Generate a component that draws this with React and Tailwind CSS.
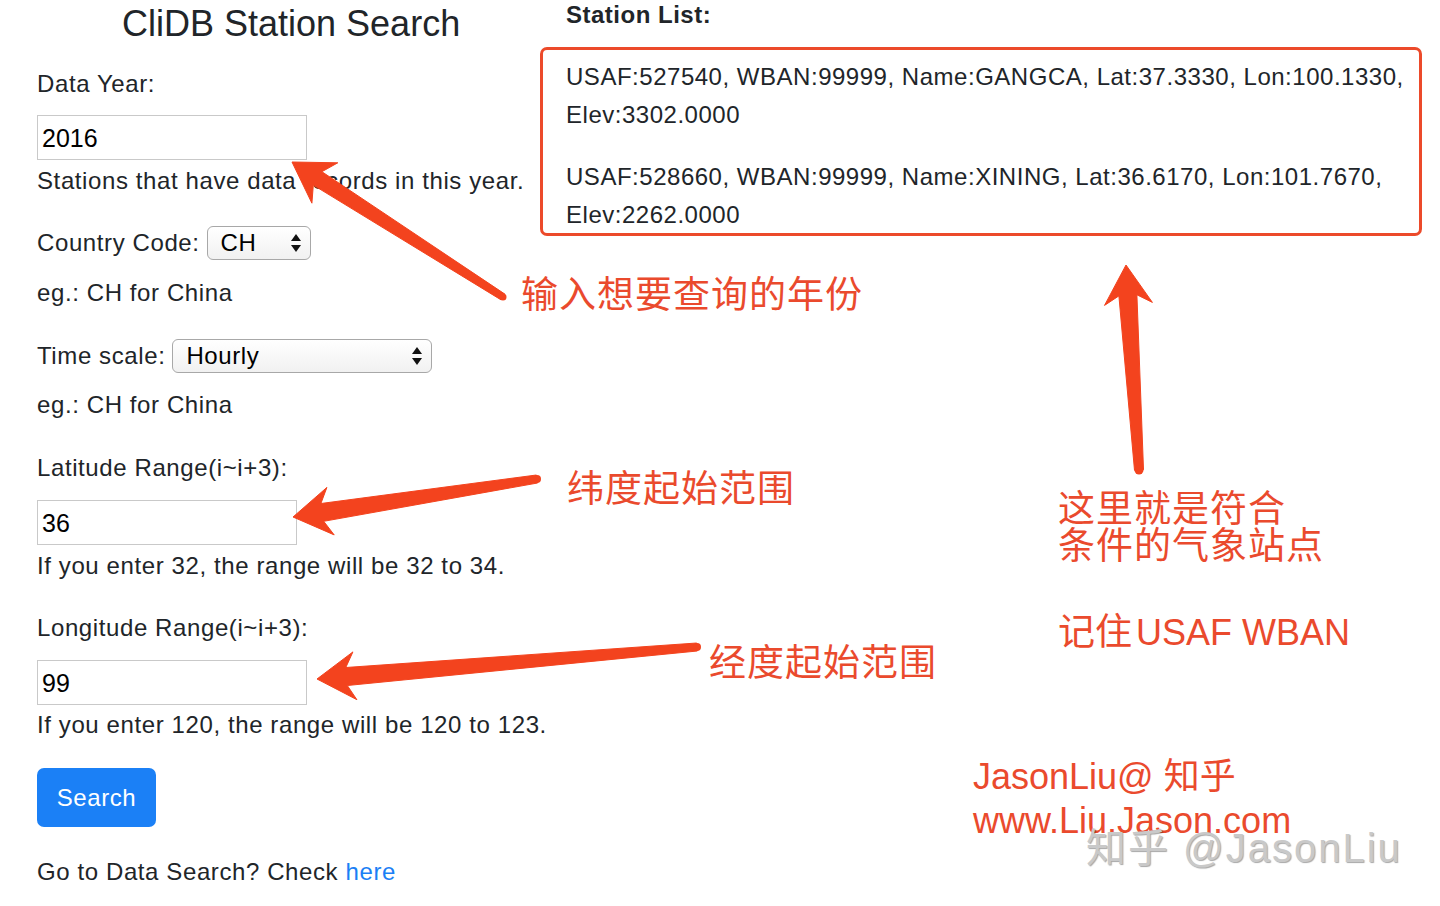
import React from "react";

function arrowPoly(tip, tail, headLen, headHalf, wHead, wTail) {
  const dx = tail[0] - tip[0];
  const dy = tail[1] - tip[1];
  const len = Math.sqrt(dx * dx + dy * dy);
  const ux = dx / len, uy = dy / len;
  const nx = -uy, ny = ux;
  const bx = tip[0] + ux * headLen, by = tip[1] + uy * headLen;
  const jx = tip[0] + ux * headLen * 0.78, jy = tip[1] + uy * headLen * 0.78;
  const pts = [
    [tip[0], tip[1]],
    [bx + nx * headHalf, by + ny * headHalf],
    [jx + nx * wHead / 2, jy + ny * wHead / 2],
    [tail[0] + nx * wTail / 2, tail[1] + ny * wTail / 2],
    [tail[0] - nx * wTail / 2, tail[1] - ny * wTail / 2],
    [jx - nx * wHead / 2, jy - ny * wHead / 2],
    [bx - nx * headHalf, by - ny * headHalf],
  ];
  return pts.map((p) => p[0].toFixed(1) + "," + p[1].toFixed(1)).join(" ");
}

const ARROWS = [
  { tip: [292, 162], tail: [503, 297], hl: 39, hh: 24, wh: 16, wt: 7 },
  { tip: [293, 517], tail: [537, 479], hl: 38, hh: 24, wh: 18, wt: 8 },
  { tip: [317, 679], tail: [697, 647], hl: 38, hh: 24, wh: 18, wt: 8 },
  { tip: [1126, 265], tail: [1139, 470], hl: 39, hh: 24, wh: 18, wt: 9 },
];

function SelectArrows() {
  return (
    <svg width="10" height="18" viewBox="0 0 10 18">
      <path d="M5 0 L10 7 L0 7 Z" fill="#111" />
      <path d="M0 11 L10 11 L5 18 Z" fill="#111" />
    </svg>
  );
}

function FakeSelect({ value, w }) {
  return (
    <div
      className={`flex items-center justify-between h-[34px] ${w} rounded-[6px] border border-[#a8a8a8] bg-gradient-to-b from-white to-[#f1f1f1] pl-[13px] pr-[9px] text-[24px] leading-none text-black`}
    >
      <span>{value}</span>
      <SelectArrows />
    </div>
  );
}

export default function App() {
  return (
    <div className="relative w-[1440px] h-[906px] overflow-hidden bg-white font-['Liberation_Sans',Arial,sans-serif] text-[#212529]">
      <div className="flex">
        {/* left form column */}
        <div className="w-[540px] shrink-0 pl-[37px] flex flex-col text-[24px] leading-[36px] tracking-[0.6px]">
          <h1 className="text-[36px] leading-[48px] pl-[85px] font-normal tracking-normal">CliDB Station Search</h1>
          <p className="mt-[18px]">Data Year:</p>
          <div className="mt-[13px] w-[270px] h-[45px] border border-[#c9c9c9] px-[4px] flex items-center text-black text-[25px] tracking-normal">2016</div>
          <p className="mt-[3px] whitespace-nowrap">Stations that have data records in this year.</p>

          <div className="mt-[26px] flex items-center gap-[7px] h-[36px]">
            <span>Country Code:</span>
            <FakeSelect value="CH" w="w-[104px]" />
          </div>
          <p className="mt-[14px]">eg.: CH for China</p>

          <div className="mt-[27px] flex items-center gap-[7px] h-[36px]">
            <span>Time scale:</span>
            <FakeSelect value="Hourly" w="w-[260px]" />
          </div>
          <p className="mt-[13px]">eg.: CH for China</p>

          <p className="mt-[27px]">Latitude Range(i~i+3):</p>
          <div className="mt-[14px] w-[260px] h-[45px] border border-[#c9c9c9] px-[4px] flex items-center text-black text-[25px] tracking-normal">36</div>
          <p className="mt-[3px] whitespace-nowrap">If you enter 32, the range will be 32 to 34.</p>

          <p className="mt-[26px]">Longitude Range(i~i+3):</p>
          <div className="mt-[14px] w-[270px] h-[45px] border border-[#c9c9c9] px-[4px] flex items-center text-black text-[25px] tracking-normal">99</div>
          <p className="mt-[2px] whitespace-nowrap">If you enter 120, the range will be 120 to 123.</p>

          <button className="mt-[25px] w-[119px] h-[59px] rounded-[7px] bg-[#1b80f6] text-white text-[24px]">Search</button>

          <p className="mt-[27px]">
            Go to Data Search? Check <span className="text-[#1b7ff5]">here</span>
          </p>
        </div>

        {/* right station list column */}
        <div className="flex-1 flex flex-col">
          <p className="pl-[26px] text-[24px] leading-[30px] font-bold tracking-[0.5px]">Station List:</p>
          <div className="mt-[17px] w-[882px] h-[189px] border-[3px] border-[#ec4a2a] rounded-[7px] pl-[23px] pt-[8px] text-[24px] leading-[38px] whitespace-nowrap tracking-[0.52px]">
            <p>
              USAF:527540, WBAN:99999, Name:GANGCA, Lat:37.3330, Lon:100.1330,
              <br />
              Elev:3302.0000
            </p>
            <p className="mt-[24px]">
              USAF:528660, WBAN:99999, Name:XINING, Lat:36.6170, Lon:101.7670,
              <br />
              Elev:2262.0000
            </p>
          </div>
        </div>
      </div>

      {/* annotation arrows */}
      <svg className="absolute left-0 top-0 pointer-events-none" width="1440" height="906" viewBox="0 0 1440 906">
        {ARROWS.map((a, i) => (
          <g key={i} fill="#f3431e">
            <polygon points={arrowPoly(a.tip, a.tail, a.hl, a.hh, a.wh, a.wt)} strokeLinejoin="round" stroke="#f3431e" strokeWidth="1" />
            <circle cx={a.tail[0]} cy={a.tail[1]} r={a.wt / 2} />
          </g>
        ))}
      </svg>

      {/* annotation texts */}
      <div className="absolute inset-0 pointer-events-none text-[#ea4a2d] font-['Liberation_Sans','Noto_Sans_CJK_SC',sans-serif]">
        <p className="absolute left-[521px] top-[276px] text-[37px] leading-[40px] tracking-[1px] whitespace-nowrap">输入想要查询的年份</p>
        <p className="absolute left-[567px] top-[470px] text-[37px] leading-[40px] tracking-[1px] whitespace-nowrap">纬度起始范围</p>
        <p className="absolute left-[709px] top-[644px] text-[37px] leading-[40px] tracking-[1px] whitespace-nowrap">经度起始范围</p>
        <p className="absolute left-[1058px] top-[491px] text-[37px] leading-[37px] tracking-[1px] whitespace-nowrap">
          这里就是符合
          <br />
          条件的气象站点
        </p>
        <p className="absolute left-[1058px] top-[613px] text-[37px] leading-[40px] whitespace-nowrap">
          记住<span className="ml-[4px] text-[36px]">USAF WBAN</span>
        </p>
        <p className="absolute left-[973px] top-[755px] text-[36px] leading-[44px] whitespace-nowrap">
          JasonLiu@ 知乎
          <br />
          www.Liu.Jason.com
        </p>
        <p className="absolute left-[1086px] top-[826px] text-[40px] leading-[44px] tracking-[2px] whitespace-nowrap text-[#c9c9c9] [text-shadow:1px_1px_1px_rgba(0,0,0,0.35)]">
          知乎 @JasonLiu
        </p>
      </div>
    </div>
  );
}
